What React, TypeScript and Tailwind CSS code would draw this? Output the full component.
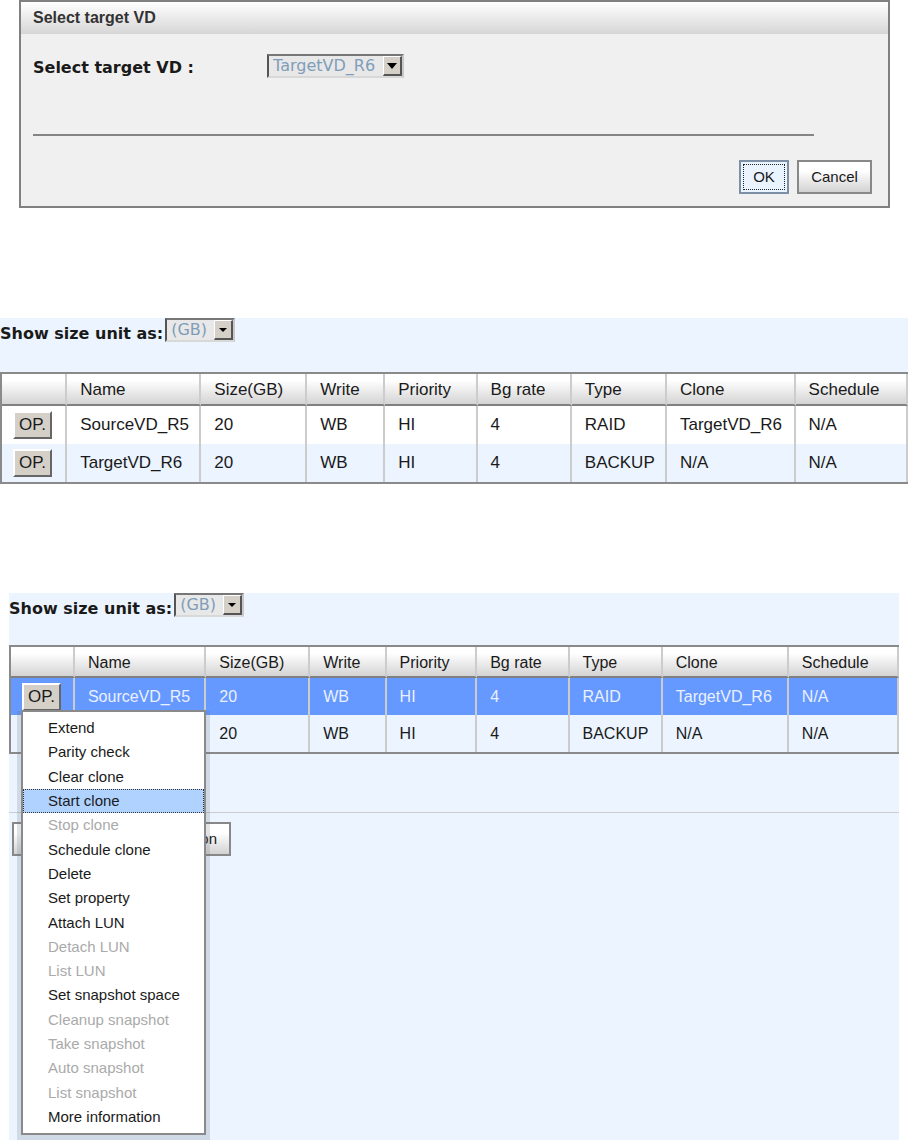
import clsx from 'clsx';

interface Volume {
    name: string;
    size: number;
    write: string;
    priority: string;
    bgRate: number;
    type: string;
    clone: string;
    schedule: string;
}

interface MenuItem {
    label: string;
    disabled?: boolean;
    active?: boolean;
}

const volumes: Volume[] = [
    { name: 'SourceVD_R5', size: 20, write: 'WB', priority: 'HI', bgRate: 4, type: 'RAID', clone: 'TargetVD_R6', schedule: 'N/A' },
    { name: 'TargetVD_R6', size: 20, write: 'WB', priority: 'HI', bgRate: 4, type: 'BACKUP', clone: 'N/A', schedule: 'N/A' },
];

const headers = ['Name', 'Size(GB)', 'Write', 'Priority', 'Bg rate', 'Type', 'Clone', 'Schedule'];

const colWidths = ['w-[7.2%]', 'w-[14.8%]', 'w-[11.7%]', 'w-[8.6%]', 'w-[10.2%]', 'w-[10.4%]', 'w-[10.5%]', 'w-[14.2%]', 'w-[12.4%]'];

const menuItems: MenuItem[] = [
    { label: 'Extend' },
    { label: 'Parity check' },
    { label: 'Clear clone' },
    { label: 'Start clone', active: true },
    { label: 'Stop clone', disabled: true },
    { label: 'Schedule clone' },
    { label: 'Delete' },
    { label: 'Set property' },
    { label: 'Attach LUN' },
    { label: 'Detach LUN', disabled: true },
    { label: 'List LUN', disabled: true },
    { label: 'Set snapshot space' },
    { label: 'Cleanup snapshot', disabled: true },
    { label: 'Take snapshot', disabled: true },
    { label: 'Auto snapshot', disabled: true },
    { label: 'List snapshot', disabled: true },
    { label: 'More information' },
];

interface SelectBoxProps {
    id: string;
    value: string;
    className: string;
    small?: boolean;
}

function SelectBox({ id, value, className, small }: SelectBoxProps) {
    return (
        <div className={clsx('relative h-6', className)}>
            <select
                id={id}
                className="block h-full w-full appearance-none border-2 border-t-[#777] border-r-[#c8c8c8] border-b-[#d8d8d8] border-l-[#555] bg-[#e8e8e8] pl-1 font-['DejaVu_Sans',sans-serif] text-[16px] leading-5 text-[#7f9db9]"
            >
                <option>{value}</option>
            </select>
            {/* Arrow button */}
            <span className="pointer-events-none absolute top-[2px] right-[2px] bottom-[2px] flex w-[19px] items-center justify-center border-t border-r-2 border-b-2 border-l border-t-white border-r-[#555] border-b-[#555] border-l-white bg-[#d4d0c8]">
                <svg width="10" height="6" viewBox="0 0 10 6" aria-hidden="true">
                    {small ? <path d="M1 1h8L5 5z" fill="#000" /> : <path d="M0 0h10L5 6z" fill="#000" />}
                </svg>
            </span>
        </div>
    );
}

function SizeUnit({ id }: { id: string }) {
    return (
        <div className="flex items-start gap-[2px]">
            <label htmlFor={id} className="pt-1 font-['DejaVu_Sans',sans-serif] text-[16px] leading-6 font-bold whitespace-nowrap">
                Show size unit as:
            </label>
            <SelectBox id={id} value="(GB)" className="w-[70px]" small />
        </div>
    );
}

function OpButton() {
    return (
        <button className="block h-7 w-[39px] border-2 border-t-white border-r-[#666] border-b-[#666] border-l-white bg-[#d4d0c8] text-center text-[17px] leading-6">
            OP.
        </button>
    );
}

interface VolumeTableProps {
    selected?: number;
    menu?: boolean;
}

function VolumeTable({ selected, menu }: VolumeTableProps) {
    return (
        <table
            className={clsx(
                'w-full table-fixed border-separate border-spacing-0 border-y-2 border-l-2 border-y-[#8a8a8a] border-l-[#8a8a8a] text-left',
                menu ? 'text-[16px]' : 'text-[17px]'
            )}
        >
            <colgroup>
                {colWidths.map((w, i) => (
                    <col key={i} className={w} />
                ))}
            </colgroup>
            <thead>
                <tr className={clsx('bg-linear-to-b from-white from-20% to-[#d0d0d0]', menu ? 'h-[31px]' : 'h-8')}>
                    <td className="border-r-2 border-b-2 border-r-[#ccc] border-b-[#808080]"></td>
                    {headers.map((h) => (
                        <th key={h} className="border-r-2 border-b-2 border-r-[#ccc] border-b-[#808080] pt-[2px] pl-[13px] font-normal whitespace-nowrap">
                            {h}
                        </th>
                    ))}
                </tr>
            </thead>
            <tbody>
                {volumes.map((v, i) => {
                    const cells = [v.name, v.size, v.write, v.priority, v.bgRate, v.type, v.clone, v.schedule];
                    // the open menu lies over the first two cells of the row below it
                    const covered = menu && i !== selected;
                    return (
                        <tr
                            key={v.name}
                            className={clsx(
                                menu ? 'h-[37px]' : 'h-[38px]',
                                selected === i ? 'bg-[#6699ff] text-[#eaf0ff]' : i % 2 ? 'bg-[#ebf4ff]' : 'bg-white'
                            )}
                        >
                            <td className="border-r-2 border-r-[#ccc] pl-[11px] text-[#1a1a1a]">{!covered && <OpButton />}</td>
                            {cells.map((c, j) => (
                                <td key={j} className="border-r-2 border-r-[#ccc] pl-[13px] whitespace-nowrap">
                                    {covered && j === 0 ? null : c}
                                </td>
                            ))}
                        </tr>
                    );
                })}
            </tbody>
        </table>
    );
}

function OperationMenu() {
    return (
        <div
            role="menu"
            className="absolute top-[117px] left-3 flex h-[425px] w-[185px] flex-col border-2 border-[#8a8a8a] bg-white py-[4px] text-[15px] shadow-[0_5px_0_4px_rgba(100,110,130,0.2)]"
        >
            {menuItems.map((item) => (
                <button
                    key={item.label}
                    role="menuitem"
                    disabled={item.disabled}
                    className={clsx(
                        'flex flex-1 items-center border pl-6 text-left leading-5',
                        item.active ? 'border-dotted border-[#333] bg-[#b0d2ff]' : 'border-transparent',
                        item.disabled && 'text-[#aaa]'
                    )}
                >
                    {item.label}
                </button>
            ))}
        </div>
    );
}

function TargetDialog() {
    return (
        <section className="mr-[18px] ml-[19px] border-2 border-[#808080] bg-[#f0f0f0]">
            <h1 className="h-8 bg-linear-to-b from-white to-[#d6d6d6] pl-3 text-[16px] leading-8 font-bold text-[#333]">Select target VD</h1>
            <div className="px-3 pt-5 pb-3">
                <div className="flex items-start">
                    <label htmlFor="target" className="w-[234px] pt-[2px] font-['DejaVu_Sans',sans-serif] text-[16px] leading-6 font-bold">
                        Select target VD :
                    </label>
                    <SelectBox id="target" value="TargetVD_R6" className="w-[137px]" />
                </div>
                <hr className="mt-[54px] mr-[62px] border-t-2 border-[#858585]" />
                <div className="mt-6 mr-1 flex justify-end gap-2">
                    <button className="h-[34px] w-[50px] border-2 border-[#7d8fa5] bg-[#eaf4ff] p-[2px] text-[15px]">
                        <span className="flex h-full items-center justify-center border border-dotted border-[#222]">OK</span>
                    </button>
                    <button className="h-[34px] w-[75px] border-2 border-[#888] bg-linear-to-b from-white from-30% to-[#d2d2d2] text-[15px]">Cancel</button>
                </div>
            </div>
        </section>
    );
}

function App() {
    return (
        <main className="flex min-h-screen flex-col bg-white font-['Liberation_Sans',Arial,sans-serif] text-[#1a1a1a]">
            <TargetDialog />

            <section className="mt-[110px] bg-[#ebf4ff]">
                <SizeUnit id="unit-list" />
                <div className="mt-[26px]">
                    <VolumeTable />
                </div>
            </section>

            <section className="relative mx-[9px] mt-[109px] flex-1 bg-[#ebf4ff]">
                <SizeUnit id="unit-menu" />
                <div className="mt-6">
                    <VolumeTable selected={0} menu />
                </div>
                <hr className="mt-[58px] border-[#ccc]" />
                <button className="mt-[9px] ml-[3px] block h-[34px] w-[219px] border-2 border-[#888] bg-linear-to-b from-white from-30% to-[#d2d2d2] pr-3 text-right text-[15px]">
                    on
                </button>
                <OperationMenu />
            </section>
        </main>
    );
}

export default App;
